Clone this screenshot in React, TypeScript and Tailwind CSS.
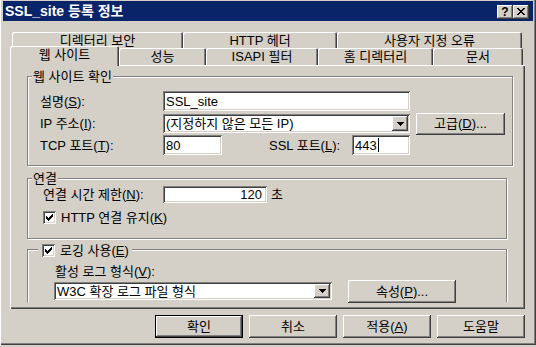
import React from "react";

const raised =
  "bg-[#d4d0c8] shadow-[inset_-1px_-1px_#404040,inset_1px_1px_#fff,inset_-2px_-2px_#808080,inset_2px_2px_#d4d0c8]";
const sunken =
  "bg-white shadow-[inset_1px_1px_#808080,inset_-1px_-1px_#fff,inset_2px_2px_#404040,inset_-2px_-2px_#d4d0c8]";
const tabShadow =
  "bg-[#d4d0c8] rounded-t-[2px] shadow-[inset_1px_1px_#fff,inset_-1px_0_#404040,inset_-2px_0_#808080]";

function Arrow() {
  return (
    <svg width="7" height="4" viewBox="0 0 7 4" shapeRendering="crispEdges">
      <path d="M0 0H7V1H6V2H5V3H4V4H3V3H2V2H1V1H0Z" fill="#000" />
    </svg>
  );
}

function Combo({ className, text }: { className: string; text: string }) {
  return (
    <div className={`${sunken} ${className} flex items-stretch py-[2px] pr-[2px] pl-[3px]`}>
      <div className="flex-1 flex items-center whitespace-nowrap overflow-hidden">{text}</div>
      <div className={`${raised} w-[16px] flex items-center justify-center`}>
        <Arrow />
      </div>
    </div>
  );
}

function Check() {
  return (
    <span className={`${sunken} w-[13px] h-[13px] shrink-0 flex items-center justify-center`}>
      <svg width="7" height="7" viewBox="0 0 7 7" shapeRendering="crispEdges">
        <path
          d="M6 0H7V3H6V4H5V5H4V6H3V7H2V6H1V5H0V2H1V3H2V4H3V3H4V2H5V1H6Z"
          fill="#000"
        />
      </svg>
    </span>
  );
}

function Btn({ children, className }: { children: React.ReactNode; className: string }) {
  return (
    <div className={`${raised} ${className} flex items-center justify-center whitespace-nowrap`}>
      {children}
    </div>
  );
}

export default function App() {
  return (
    <div className="w-[536px] h-[347px] bg-[#d4d0c8] font-['Liberation_Sans','Noto_Sans_CJK_KR',sans-serif] text-[13px] leading-[15px] text-black overflow-hidden">
      <div className="w-[536px] h-[345px] flex flex-col px-[3px] shadow-[inset_1px_0_#fff,inset_-1px_-1px_#404040,inset_-2px_-2px_#808080]">
        {/* Title bar */}
        <div className="mt-[1px] h-[20px] bg-[#0a246a] flex items-center pl-[2px] pr-[4px] pt-[1px]">
          <span className="text-white font-bold text-[14px] leading-[17px]">SSL_site 등록 정보</span>
          <div className="ml-auto flex">
            <div className={`${raised} w-[16px] h-[14px] flex items-center justify-center font-bold text-[12px] leading-[12px]`}>
              ?
            </div>
            <div className={`${raised} w-[16px] h-[14px] flex items-center justify-center`}>
              <svg width="8" height="7" viewBox="0 0 8 7" shapeRendering="crispEdges">
                <path
                  d="M0 0H2V1H3V2H5V1H6V0H8V1H7V2H6V3H5V4H6V5H7V6H8V7H6V6H5V5H3V6H2V7H0V6H1V5H2V4H3V3H2V2H1V1H0Z"
                  fill="#000"
                />
              </svg>
            </div>
          </div>
        </div>

        {/* Tabs row 1 */}
        <div className="mt-[11px] ml-[9px] flex h-[16px]">
          <div className={`${tabShadow} w-[171px] h-[18px] flex justify-center pt-[1px]`}>디렉터리 보안</div>
          <div className={`${tabShadow} w-[154px] h-[18px] flex justify-center pt-[1px]`}>HTTP 헤더</div>
          <div className={`${tabShadow} w-[185px] h-[18px] flex justify-center pt-[1px]`}>사용자 지정 오류</div>
        </div>
        {/* Tabs row 2 */}
        <div className="ml-[7px] flex items-end h-[17px] relative z-10">
          <div className={`${tabShadow} w-[109px] h-[20px] -mb-[1px] flex justify-center pt-[1px]`}>웹 사이트</div>
          <div className={`${tabShadow} w-[87px] h-[17px] flex justify-center pt-[1px]`}>성능</div>
          <div className={`${tabShadow} w-[112px] h-[17px] flex justify-center pt-[1px]`}>ISAPI 필터</div>
          <div className={`${tabShadow} w-[115px] h-[17px] flex justify-center pt-[1px]`}>홈 디렉터리</div>
          <div className={`${tabShadow} w-[90px] h-[17px] flex justify-center pt-[1px]`}>문서</div>
        </div>

        {/* Panel */}
        <div className="ml-[7px] w-[515px] h-[244px] flex flex-col shadow-[inset_1px_1px_#fff,inset_-1px_-1px_#404040,inset_-2px_-2px_#808080]">
          {/* Group 1 */}
          <div className="relative ml-[17px] mt-[11px] w-[486px] h-[90px] border border-[#808080] shadow-[inset_1px_1px_#fff,1px_1px_#fff]">
            <span className="absolute left-[4px] -top-[8px] bg-[#d4d0c8] px-[1px]">웹 사이트 확인</span>
            <div className="flex flex-col pt-[14px] pl-[12px]">
              <div className="flex items-center h-[20px]">
                <span className="w-[123px]">
                  설명(<u>S</u>):
                </span>
                <div className={`${sunken} w-[247px] h-[20px] flex items-center pl-[3px]`}>SSL_site</div>
              </div>
              <div className="flex items-center h-[19px] mt-[3px]">
                <span className="w-[123px]">
                  IP 주소(<u>I</u>):
                </span>
                <Combo className="w-[247px] h-[19px]" text="(지정하지 않은 모든 IP)" />
                <Btn className="ml-[6px] w-[89px] h-[22px] shrink-0">
                  고급(<u>D</u>)...
                </Btn>
              </div>
              <div className="flex items-center h-[20px] mt-[2px]">
                <span className="w-[123px]">
                  TCP 포트(<u>T</u>):
                </span>
                <div className={`${sunken} w-[59px] h-[20px] flex items-center pl-[3px]`}>80</div>
                <span className="ml-[47px] w-[83px]">
                  SSL 포트(<u>L</u>):
                </span>
                <div className={`${sunken} w-[58px] h-[20px] flex items-center pl-[3px]`}>
                  443<span className="w-[1px] h-[14px] bg-black ml-[1px]" />
                </div>
              </div>
            </div>
          </div>

          {/* Group 2 */}
          <div className="relative ml-[17px] mt-[12px] w-[480px] h-[61px] border border-[#808080] shadow-[inset_1px_1px_#fff,1px_1px_#fff]">
            <span className="absolute left-[4px] -top-[8px] bg-[#d4d0c8] px-[1px]">연결</span>
            <div className="flex flex-col pt-[7px] pl-[15px]">
              <div className="flex items-center h-[17px]">
                <span className="w-[120px]">
                  연결 시간 제한(<u>N</u>):
                </span>
                <div className={`${sunken} w-[104px] h-[17px] flex items-center justify-end pr-[5px]`}>120</div>
                <span className="ml-[4px]">초</span>
              </div>
              <div className="flex items-center mt-[8px] h-[13px]">
                <Check />
                <span className="ml-[5px]">
                  HTTP 연결 유지(<u>K</u>)
                </span>
              </div>
            </div>
          </div>

          {/* Group 3 */}
          <div className="relative ml-[17px] mt-[10px] w-[480px] h-[53px] border-t border-x border-[#808080] shadow-[inset_1px_1px_#fff,1px_0_#fff]">
            <div className="absolute left-[10px] -top-[7px] bg-[#d4d0c8] pl-[4px] pr-[3px] flex items-center">
              <Check />
              <span className="ml-[5px]">
                로깅 사용(<u>E</u>)
              </span>
            </div>
            <div className="flex flex-col pt-[14px] pl-[26px]">
              <span className="ml-[1px]">
                활성 로그 형식(<u>V</u>):
              </span>
              <div className="flex items-center h-[18px] mt-[3px]">
                <Combo className="w-[278px] h-[18px]" text="W3C 확장 로그 파일 형식" />
                <Btn className="ml-[16px] w-[108px] h-[23px] shrink-0">
                  속성(<u>P</u>)...
                </Btn>
              </div>
            </div>
          </div>
        </div>

        {/* Bottom buttons */}
        <div className="mt-[6px] ml-[152px] flex gap-[6px]">
          <div className="w-[88px] h-[23px] border border-black">
            <Btn className="w-full h-full">확인</Btn>
          </div>
          <Btn className="w-[88px] h-[23px]">취소</Btn>
          <Btn className="w-[88px] h-[23px]">
            적용(<u>A</u>)
          </Btn>
          <Btn className="w-[88px] h-[23px]">도움말</Btn>
        </div>
      </div>
    </div>
  );
}
